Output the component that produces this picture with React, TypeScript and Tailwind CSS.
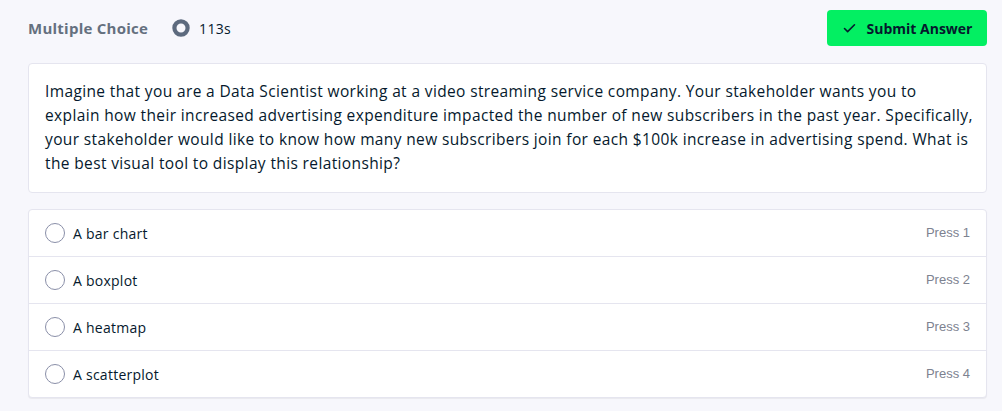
import { Check } from "lucide-react";

const options = ["A bar chart", "A boxplot", "A heatmap", "A scatterplot"];

export default function App() {
  return (
    <div className="min-h-[411px] bg-[#f7f7fc] pl-7 pr-[15px] pt-2.5 font-['Open_Sans',sans-serif] text-[#05192d]">
      {/* header */}
      <div className="flex h-9 items-center justify-between">
        <div className="flex items-center">
          <span className="text-[15px] font-bold tracking-[0.25px] text-[#65707f]">Multiple Choice</span>
          <svg className="ml-[24px] h-[18px] w-[18px]" viewBox="0 0 18 18">
            <circle cx="9" cy="9" r="6.6" fill="none" stroke="#5d6a7e" strokeWidth="4.2" />
          </svg>
          <span className="ml-[9px] text-[14px] tracking-[0.3px] text-[#05192d]">113s</span>
        </div>
        <button className="flex h-9 w-[160px] items-center justify-center gap-2.5 rounded bg-[#03ef62] text-[14px] font-bold text-[#05192d]">
          <Check size={15} strokeWidth={2.5} />
          Submit Answer
        </button>
      </div>

      {/* question */}
      <div className="mt-[17px] rounded border border-[#e5e5ef] bg-white px-4 pb-[17px] pt-[15px]">
        <p className="whitespace-nowrap text-[15.5px] leading-6 tracking-[0.37px] text-[#05192d]">
          Imagine that you are a Data Scientist working at a video streaming service company. Your stakeholder wants you to
          <br />
          explain how their increased advertising expenditure impacted the number of new subscribers in the past year. Specifically,
          <br />
          your stakeholder would like to know how many new subscribers join for each $100k increase in advertising spend. What is
          <br />
          the best visual tool to display this relationship?
        </p>
      </div>

      {/* options */}
      <div className="mt-4 rounded border border-[#e5e5ef] bg-white shadow-[0_1px_1px_rgba(0,0,0,0.06)]">
        {options.map((opt, i) => (
          <div
            key={opt}
            className={
              "flex h-[46px] box-content items-center px-4" + (i > 0 ? " border-t border-[#e5e5ef]" : "")
            }
          >
            <span className="h-[20px] w-[20px] rounded-full border-[1.5px] border-[#8a8fa8]" />
            <span className="ml-2 text-[14px] tracking-[0.25px] text-[#05192d]">{opt}</span>
            <span className="ml-auto font-['Liberation_Sans',sans-serif] text-[13px] text-[#7d8290]">
              Press {i + 1}
            </span>
          </div>
        ))}
      </div>
    </div>
  );
}
